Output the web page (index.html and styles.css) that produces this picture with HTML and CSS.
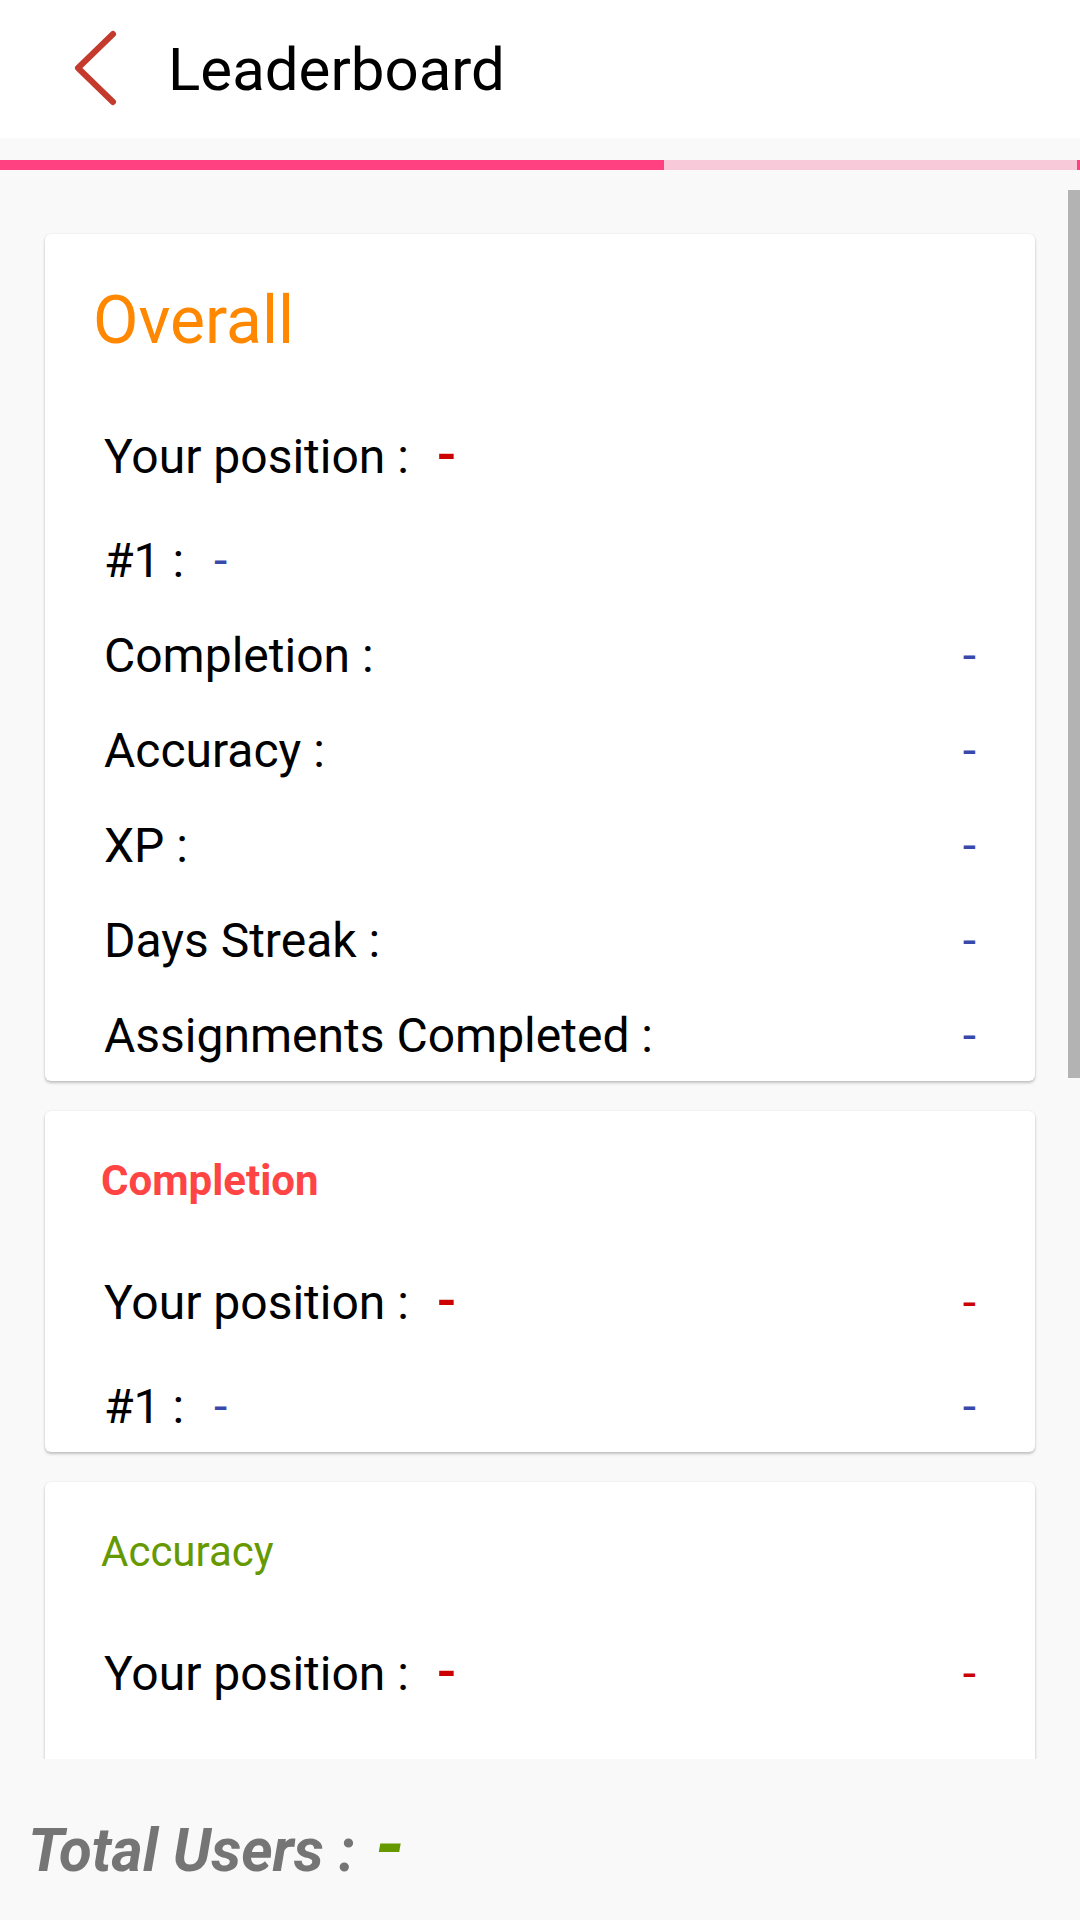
FILE: index.html
```html
<!DOCTYPE html>
<html lang="en">
<head>
<meta charset="utf-8">
<title>Leaderboard</title>
<link rel="stylesheet" href="styles.css">
</head>
<body>
<header class="toolbar">
  <svg class="back" width="50" height="80" viewBox="0 0 50 80" aria-hidden="true">
    <polyline points="43,5 8,39 43,73" fill="none" stroke="#c43a2c" stroke-width="6" stroke-linecap="round" stroke-linejoin="round"/>
  </svg>
  <h1 class="title">Leaderboard</h1>
</header>
<div class="progress">
  <div class="progress-fill" style="width:664px"></div>
  <div class="progress-rest"></div>
  <div class="progress-end"></div>
</div>
<main class="scroll">
  <div class="scrollbar"></div>
  <section class="card card-overall">
    <h2 class="card-title title-overall">Overall</h2>
    <div class="rows rows-overall">
      <div class="row row-first"><span class="label">Your position :</span><span class="dash dash-pos">-</span></div>
      <div class="row"><span class="label">#1 :</span><span class="dash dash-top">-</span></div>
      <div class="row"><span class="label">Completion :</span><span class="dash dash-right blue">-</span></div>
      <div class="row"><span class="label">Accuracy :</span><span class="dash dash-right blue">-</span></div>
      <div class="row"><span class="label">XP :</span><span class="dash dash-right blue">-</span></div>
      <div class="row"><span class="label">Days Streak :</span><span class="dash dash-right blue">-</span></div>
      <div class="row"><span class="label">Assignments Completed :</span><span class="dash dash-right blue">-</span></div>
    </div>
  </section>
  <section class="card">
    <h2 class="card-title title-small title-completion">Completion</h2>
    <div class="rows rows-small">
      <div class="row row-first"><span class="label">Your position :</span><span class="dash dash-pos">-</span><span class="dash dash-right red">-</span></div>
      <div class="row"><span class="label">#1 :</span><span class="dash dash-top">-</span><span class="dash dash-right blue">-</span></div>
    </div>
  </section>
  <section class="card card-clipped">
    <h2 class="card-title title-small title-accuracy">Accuracy</h2>
    <div class="rows rows-small">
      <div class="row row-first"><span class="label">Your position :</span><span class="dash dash-pos">-</span><span class="dash dash-right red">-</span></div>
    </div>
  </section>
</main>
<footer class="total">
  <span class="total-label">Total Users :</span><span class="total-value">-</span>
</footer>
</body>
</html>
```
FILE: styles.css
```css
* { box-sizing: border-box; }
html, body { margin: 0; padding: 0; }
body {
  width: 1080px;
  height: 1920px;
  overflow: hidden;
  background: #f9f9f9;
  font-family: Roboto, "Noto Sans", "Liberation Sans", sans-serif;
  color: #000;
}
.toolbar {
  height: 138px;
  background: #fff;
  display: flex;
  align-items: center;
  padding-left: 70px;
}
.back { display: block; flex: none; }
.title {
  margin: 2px 0 0 48px;
  font-size: 60px;
  font-weight: 400;
  line-height: 70px;
}
.progress {
  margin-top: 22px;
  height: 10px;
  display: flex;
}
.progress-fill { background: #ff4081; height: 100%; }
.progress-rest { flex: 1; background: #f8c9d9; height: 100%; }
.progress-end { width: 3px; background: #ff4081; height: 100%; }
.scroll {
  position: relative;
  height: 1589px;
  overflow: hidden;
  padding: 64px 0 0 45px;
  display: flex;
  flex-direction: column;
  gap: 30px;
}
.scrollbar {
  position: absolute;
  right: 0;
  top: 20px;
  width: 12px;
  height: 888px;
  background: #b3b3b3;
}
.card {
  flex: none;
  width: 990px;
  background: #fff;
  border-radius: 6px;
  box-shadow: 0 2px 3px rgba(0,0,0,0.22), 0 0 2px rgba(0,0,0,0.08);
  padding: 42px 59px 0 59px;
}
.card-overall { padding-top: 43px; }
.card-clipped { padding-bottom: 103px; }
.card-title { margin: 0; font-weight: 400; }
.title-overall {
  margin-left: -11px;
  font-size: 66px;
  line-height: 88px;
  color: #ff8800;
}
.title-small {
  margin-left: -3px;
  font-size: 42px;
  line-height: 56px;
}
.title-completion { color: #ff4444; font-weight: 700; }
.title-accuracy { color: #669900; }
.rows-overall { margin-top: 42px; }
.rows-small { margin-top: 44px; }
.row {
  display: flex;
  align-items: baseline;
  height: 95px;
  font-size: 48px;
  line-height: 95px;
}
.row:last-child { height: 93px; }
.row-first { margin-bottom: 11px; }
.label { white-space: nowrap; }
.dash { line-height: 95px; }
.dash-pos {
  color: #cc0000;
  font-size: 56px;
  font-weight: 500;
  margin-left: 28px;
}
.dash-top {
  color: #3949ab;
  margin-left: 30px;
}
.dash-right { margin-left: auto; }
.blue { color: #3949ab; }
.red { color: #cc0000; }
.total {
  height: 161px;
  padding: 46px 0 0 28px;
  line-height: 80px;
  font-style: italic;
  font-weight: 700;
  white-space: nowrap;
}
.total-label { font-size: 60px; color: #757575; }
.total-value {
  font-size: 76px;
  color: #669900;
  margin-left: 20px;
}
```
